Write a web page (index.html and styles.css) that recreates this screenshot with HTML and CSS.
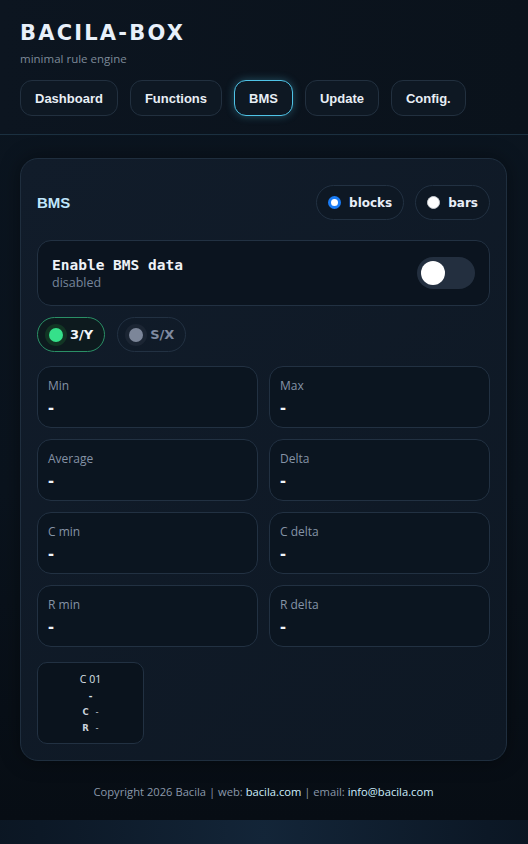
FILE: index.html
```html
<!DOCTYPE html>
<html lang="en">
<head>
    <meta charset="UTF-8">
    <meta name="viewport" content="width=device-width, initial-scale=1.0">
    <title>BACILA-BOX · BMS</title>
    <link rel="stylesheet" href="styles.css">
</head>
<body>
    <div class="page">
        <header class="topbar">
            <h1 class="brand">BACILA-BOX</h1>
            <div class="tagline">minimal rule engine</div>
            <nav class="nav">
                <a class="nav-btn" href="#">Dashboard</a>
                <a class="nav-btn" href="#">Functions</a>
                <a class="nav-btn active" href="#">BMS</a>
                <a class="nav-btn" href="#">Update</a>
                <a class="nav-btn" href="#">Config.</a>
            </nav>
        </header>

        <main class="main">
            <section class="card">
                <div class="card-head">
                    <div class="card-title">BMS</div>
                    <div class="view-switch">
                        <label class="pill"><span class="radio checked"></span>blocks</label>
                        <label class="pill"><span class="radio"></span>bars</label>
                    </div>
                </div>

                <div class="enable-row">
                    <div>
                        <div class="enable-title">Enable BMS data</div>
                        <div class="enable-state">disabled</div>
                    </div>
                    <div class="toggle"><span class="knob"></span></div>
                </div>

                <div class="chips">
                    <div class="chip on"><span class="dot"></span>3/Y</div>
                    <div class="chip"><span class="dot"></span>S/X</div>
                </div>

                <div class="stats">
                    <div class="stat"><div class="stat-label">Min</div><div class="stat-value">-</div></div>
                    <div class="stat"><div class="stat-label">Max</div><div class="stat-value">-</div></div>
                    <div class="stat"><div class="stat-label">Average</div><div class="stat-value">-</div></div>
                    <div class="stat"><div class="stat-label">Delta</div><div class="stat-value">-</div></div>
                    <div class="stat"><div class="stat-label">C min</div><div class="stat-value">-</div></div>
                    <div class="stat"><div class="stat-label">C delta</div><div class="stat-value">-</div></div>
                    <div class="stat"><div class="stat-label">R min</div><div class="stat-value">-</div></div>
                    <div class="stat"><div class="stat-label">R delta</div><div class="stat-value">-</div></div>
                </div>

                <div class="cells">
                    <div class="cell">
                        <div class="cell-name">C 01</div>
                        <div class="cell-volt">-</div>
                        <div class="cell-line"><b>C</b> -</div>
                        <div class="cell-line"><b>R</b> -</div>
                    </div>
                </div>
            </section>

            <footer class="footer">
                Copyright 2026 Bacila | web: <a href="#">bacila.com</a> | email: <a href="#">info@bacila.com</a>
            </footer>
        </main>
    </div>
</body>
</html>
```

FILE: styles.css
```css
/* base */
* {
    box-sizing: border-box;
    margin: 0;
    padding: 0;
}

html {
    background: radial-gradient(ellipse at 50% 100%, #132538 0%, #0c1826 60%, #09121c 100%);
    min-height: 100%;
}

body {
    font-family: 'Open Sans', 'Noto Sans', sans-serif;
    color: #dbe6f2;
}

.page {
    background: linear-gradient(180deg, #0b1520 0%, #0a131d 60%, #070d14 100%);
    height: 820px;
}

/* header */
.topbar {
    padding: 20px 20px 18px;
    border-bottom: 1px solid #1b3040;
    background: linear-gradient(90deg, #0c1520 0%, #0a121b 100%);
}

.brand {
    font-family: 'DejaVu Sans', sans-serif;
    font-weight: 800;
    font-size: 21px;
    letter-spacing: 2.2px;
    color: #e8f0fa;
    line-height: 26px;
}

.tagline {
    font-size: 11.5px;
    color: #7d8a99;
    margin-top: 5px;
    line-height: 16px;
}

.nav {
    display: flex;
    gap: 12px;
    margin-top: 13px;
}

.nav-btn {
    display: inline-flex;
    align-items: center;
    height: 36px;
    padding: 0 14px;
    border: 1px solid #22303f;
    border-radius: 12px;
    background: #0e1823;
    color: #e8eef5;
    font-family: 'Liberation Sans', Arial, sans-serif;
    font-weight: bold;
    font-size: 13px;
    text-decoration: none;
}

.nav-btn.active {
    border-color: #4fc3e6;
    box-shadow: 0 0 8px rgba(79, 195, 230, 0.35);
}

/* main card */
.main {
    padding: 23px 21px 0 20px;
}

.card {
    background: linear-gradient(135deg, #111c2a 0%, #0e1824 100%);
    border: 1px solid #1f2e3e;
    border-radius: 18px;
    padding: 26px 16px 16px;
    box-shadow: 0 0 20px rgba(0, 0, 0, 0.4);
}

.card-head {
    display: flex;
    align-items: center;
    justify-content: space-between;
}

.card-title {
    font-family: 'Liberation Sans', Arial, sans-serif;
    font-weight: bold;
    font-size: 15px;
    color: #bfe5fb;
}

.view-switch {
    display: flex;
    gap: 11px;
}

.pill {
    display: inline-flex;
    align-items: center;
    gap: 8px;
    height: 35px;
    padding: 0 11px;
    border: 1px solid #223142;
    border-radius: 18px;
    background: #0e1824;
    font-family: 'DejaVu Sans', sans-serif;
    font-weight: bold;
    font-size: 12px;
    color: #e8eef8;
}

.radio {
    width: 13px;
    height: 13px;
    border-radius: 50%;
    background: #fff;
    border: 1px solid #c8ccd2;
}

.radio.checked {
    border: 3px solid #1a7cf5;
    background: #fff;
}

/* enable toggle row */
.enable-row {
    display: flex;
    align-items: center;
    justify-content: space-between;
    margin-top: 20px;
    height: 66px;
    padding: 0 14px 0 14px;
    border: 1px solid #223142;
    border-radius: 14px;
    background: #0b141f;
}

.enable-title {
    font-family: 'DejaVu Sans Mono', 'Liberation Mono', monospace;
    font-weight: bold;
    font-size: 14.5px;
    color: #eef2f7;
    line-height: 18px;
}

.enable-state {
    font-size: 12.5px;
    color: #76859a;
    line-height: 17px;
}

.toggle {
    width: 58px;
    height: 32px;
    border-radius: 16px;
    background: #232f3f;
    padding: 4px;
}

.knob {
    display: block;
    width: 24px;
    height: 24px;
    border-radius: 50%;
    background: #fff;
}

/* source chips */
.chips {
    display: flex;
    gap: 12px;
    margin-top: 11px;
}

.chip {
    display: inline-flex;
    align-items: center;
    gap: 7px;
    height: 35px;
    padding: 0 11px;
    border: 1px solid #223142;
    border-radius: 18px;
    font-family: 'DejaVu Sans', sans-serif;
    font-weight: bold;
    font-size: 13px;
    color: #7f8aa0;
}

.chip .dot {
    width: 14px;
    height: 14px;
    border-radius: 50%;
    background: #7c8699;
    box-shadow: 0 0 0 4px #1b2533;
}

.chip.on {
    border-color: #2a8f66;
    background: #0d1a1e;
    color: #f2f6fa;
}

.chip.on .dot {
    background: #35e08a;
    box-shadow: 0 0 0 4px #123524;
}

/* stat tiles */
.stats {
    display: grid;
    grid-template-columns: 1fr 1fr;
    gap: 11px;
    margin-top: 14px;
}

.stat {
    height: 62px;
    padding: 11px 10px;
    border: 1px solid #223142;
    border-radius: 14px;
    background: #0b1520;
}

.stat-label {
    font-size: 12px;
    color: #8593a6;
    line-height: 16px;
}

.stat-value {
    margin-top: 3px;
    font-family: 'Liberation Sans', Arial, sans-serif;
    font-weight: bold;
    font-size: 18px;
    color: #f1f5f9;
    line-height: 22px;
}

/* cell blocks */
.cells {
    display: flex;
    margin-top: 15px;
}

.cell {
    width: 107px;
    height: 82px;
    padding-top: 8px;
    border: 1px solid #223142;
    border-radius: 10px;
    background: #0a131d;
    text-align: center;
    color: #dbe2ea;
}

.cell-name {
    font-size: 10.5px;
    line-height: 16px;
}

.cell-volt {
    font-family: 'Liberation Sans', Arial, sans-serif;
    font-weight: bold;
    font-size: 11px;
    line-height: 17px;
}

.cell-line {
    font-family: 'DejaVu Sans', sans-serif;
    font-size: 8.5px;
    line-height: 16px;
    color: #c9d1db;
}

.cell-line b {
    margin-right: 4px;
}

/* footer */
.footer {
    padding: 23px 0;
    text-align: center;
    font-size: 11.2px;
    color: #8a98aa;
}

.footer a {
    color: #cdeefc;
    text-decoration: none;
}
```
